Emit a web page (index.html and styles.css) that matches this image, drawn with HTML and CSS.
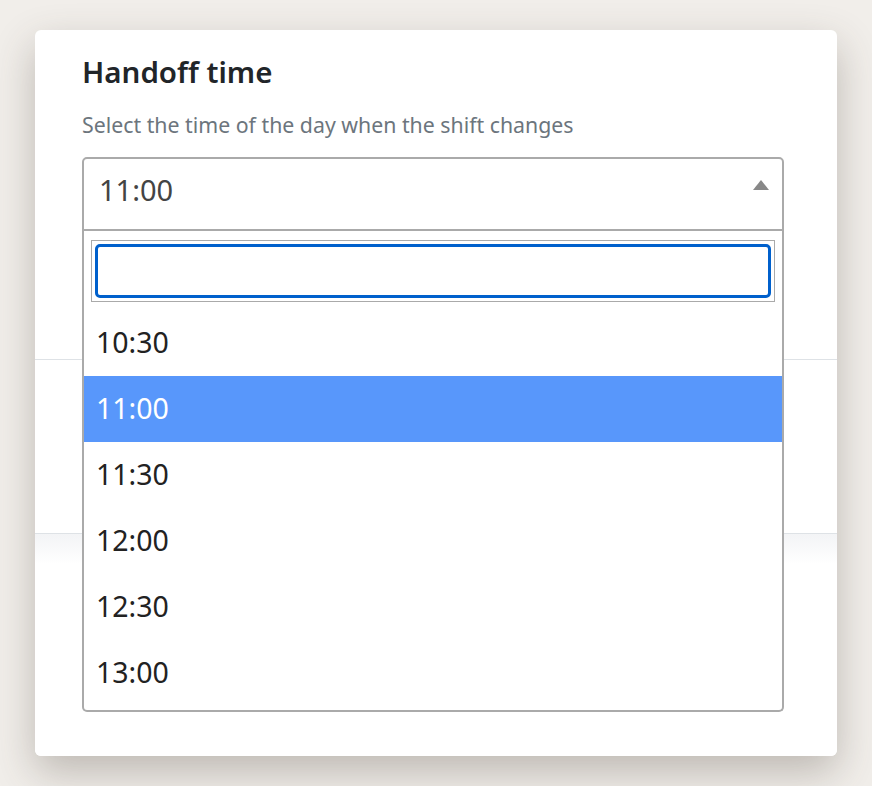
FILE: index.html
```html
<!DOCTYPE html>
<html lang="en">
<head>
    <meta charset="UTF-8">
    <meta name="viewport" content="width=device-width, initial-scale=1.0">
    <title>Handoff time</title>
    <link rel="stylesheet" href="styles.css">
</head>
<body>
    <div class="modal">
        <section class="modal-header">
            <h2 class="title">Handoff time</h2>
            <p class="hint">Select the time of the day when the shift changes</p>

            <!-- Open select with search box -->
            <div class="select open">
                <div class="select-current">
                    <span class="select-value">11:00</span>
                    <span class="select-arrow"></span>
                </div>
                <div class="select-dropdown">
                    <div class="select-search">
                        <input type="text" class="search-input" aria-label="Search">
                    </div>
                    <ul class="select-options">
                        <li>10:30</li>
                        <li class="highlighted">11:00</li>
                        <li>11:30</li>
                        <li>12:00</li>
                        <li>12:30</li>
                        <li>13:00</li>
                    </ul>
                </div>
            </div>
        </section>
        <section class="modal-body"></section>
        <section class="modal-footer"></section>
    </div>
</body>
</html>
```

FILE: styles.css
```css
/* Page */
html {
    background-color: #f1eeea;
}

body {
    margin: 0;
    min-height: 100vh;
    padding: 30px 0 0 35px;
    box-sizing: border-box;
    font-family: "Noto Sans", "Open Sans", sans-serif;
}

/* Modal card */
.modal {
    width: 802px;
    height: 726px;
    background-color: #fff;
    border-radius: 6px;
    box-shadow: 0 16px 40px rgba(70, 60, 50, 0.3);
    display: flex;
    flex-direction: column;
}

.modal-header {
    height: 329px;
    padding: 0 53px 0 47px;
    border-bottom: 1px solid #dee2e6;
}

.title {
    margin: 24px 0 0;
    font-size: 29.5px;
    font-weight: 600;
    line-height: 36px;
    color: #212529;
}

.hint {
    margin: 21px 0 0;
    font-size: 21.3px;
    line-height: 28px;
    color: #6c757d;
}

.modal-body {
    height: 173px;
    border-bottom: 1px solid #dee2e6;
}

.modal-footer {
    flex: 1;
    background: linear-gradient(#f3f4f6, #fff 30px);
    border-radius: 0 0 6px 6px;
}

/* Select */
.select {
    position: relative;
    margin-top: 18px;
}

.select-current {
    height: 70px;
    border: 2px solid #aaa;
    border-radius: 5px 5px 0 0;
    display: flex;
    align-items: center;
    padding: 0 13px 0 15px;
}

.select-value {
    flex: 1;
    padding-bottom: 9px;
    font-size: 29px;
    color: #444;
}

.select-arrow {
    width: 0;
    height: 0;
    border-left: 8px solid transparent;
    border-right: 8px solid transparent;
    border-bottom: 10px solid #888;
    margin-bottom: 18px;
}

/* Dropdown list overlays the content below */
.select-dropdown {
    position: absolute;
    top: 74px;
    left: 0;
    right: 0;
    background-color: #fff;
    border: 2px solid #aaa;
    border-top: none;
    border-radius: 0 0 5px 5px;
    z-index: 2;
}

.select-search {
    margin: 9px 7px 8px;
    border: 1px solid #aaa;
    padding: 3px;
}

.search-input {
    display: block;
    box-sizing: border-box;
    width: 100%;
    height: 54px;
    margin: 0;
    border: 3px solid #0060cc;
    border-radius: 5px;
    outline: none;
    font-size: 24px;
}

.select-options {
    list-style: none;
    margin: 0;
    padding: 0 0 4px;
}

.select-options li {
    height: 66px;
    line-height: 64px;
    padding-left: 12px;
    font-size: 28.5px;
    color: #222;
}

.select-options li.highlighted {
    background-color: #5897fb;
    color: #fff;
}
```
